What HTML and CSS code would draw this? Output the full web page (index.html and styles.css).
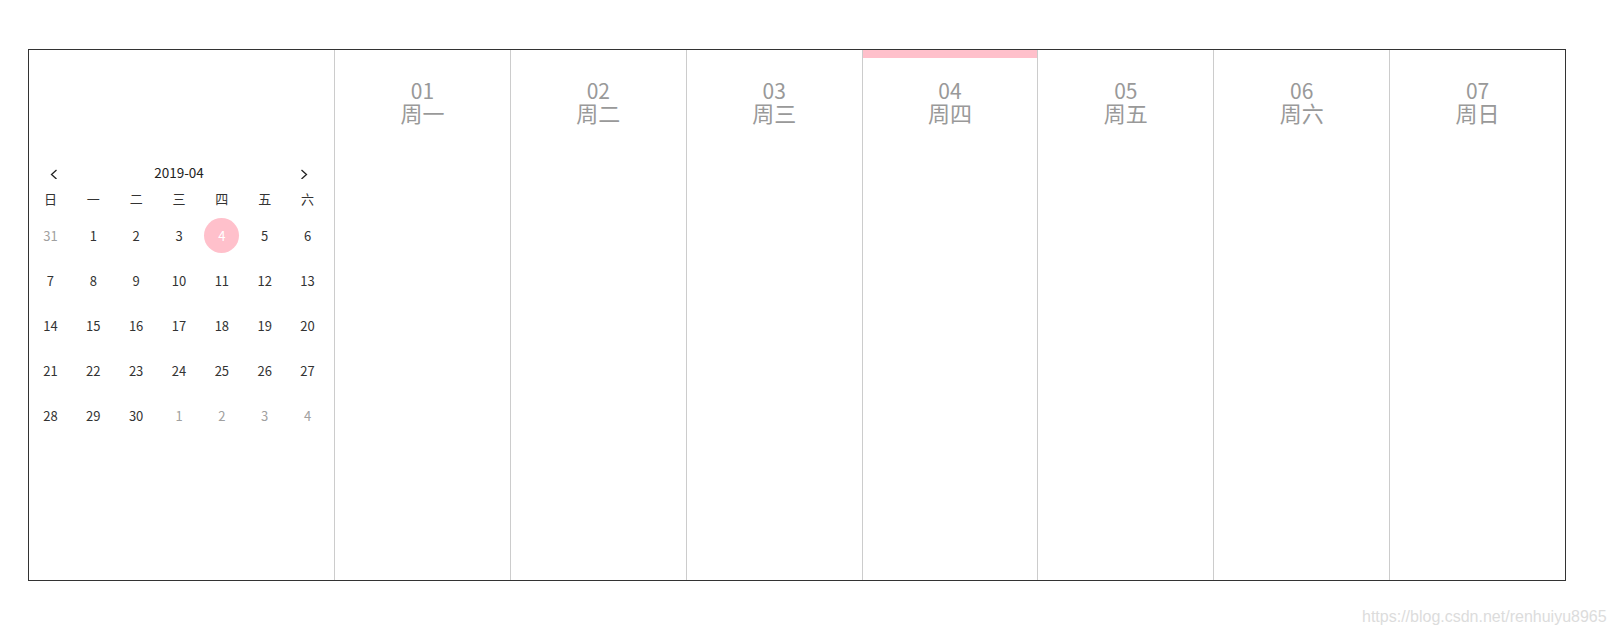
FILE: index.html
```html
<!DOCTYPE html>
<html lang="zh-CN">
<head>
<meta charset="utf-8">
<title>周视图日历</title>
<link rel="stylesheet" href="styles.css">
</head>
<body>
<div class="board">
  <aside class="side">
    <div class="cal">
      <div class="cal-head">
        <span class="arrow"><svg viewBox="0 0 8 14" width="8" height="14"><polyline points="6.5,5 1.5,9.5 6.5,14" fill="none" stroke="#222" stroke-width="1.3"/></svg></span>
        <span class="cal-title">2019-04</span>
        <span class="arrow"><svg viewBox="0 0 8 14" width="8" height="14"><polyline points="1.5,5 6.5,9.5 1.5,14" fill="none" stroke="#222" stroke-width="1.3"/></svg></span>
      </div>
      <div class="cal-week">
        <span>日</span><span>一</span><span>二</span><span>三</span><span>四</span><span>五</span><span>六</span>
      </div>
      <div class="cal-days">
        <span class="other">31</span><span>1</span><span>2</span><span>3</span><span class="sel"><i>4</i></span><span>5</span><span>6</span>
        <span>7</span><span>8</span><span>9</span><span>10</span><span>11</span><span>12</span><span>13</span>
        <span>14</span><span>15</span><span>16</span><span>17</span><span>18</span><span>19</span><span>20</span>
        <span>21</span><span>22</span><span>23</span><span>24</span><span>25</span><span>26</span><span>27</span>
        <span>28</span><span>29</span><span>30</span><span class="other">1</span><span class="other">2</span><span class="other">3</span><span class="other">4</span>
      </div>
    </div>
  </aside>
  <section class="week">
    <div class="col"><div class="strip"></div><div class="col-head"><div class="num">01</div><div class="day">周一</div></div></div>
    <div class="col"><div class="strip"></div><div class="col-head"><div class="num">02</div><div class="day">周二</div></div></div>
    <div class="col"><div class="strip"></div><div class="col-head"><div class="num">03</div><div class="day">周三</div></div></div>
    <div class="col"><div class="strip active"></div><div class="col-head"><div class="num">04</div><div class="day">周四</div></div></div>
    <div class="col"><div class="strip"></div><div class="col-head"><div class="num">05</div><div class="day">周五</div></div></div>
    <div class="col"><div class="strip"></div><div class="col-head"><div class="num">06</div><div class="day">周六</div></div></div>
    <div class="col"><div class="strip"></div><div class="col-head"><div class="num">07</div><div class="day">周日</div></div></div>
  </section>
</div>
<div class="watermark">https://blog.csdn.net/renhuiyu8965</div>
</body>
</html>
```

FILE: styles.css
```css
html, body {
  margin: 0;
  padding: 0;
  background: #fff;
}
body {
  width: 1613px;
  height: 637px;
  position: relative;
  overflow: hidden;
  font-family: "Noto Sans CJK SC", "Noto Sans", sans-serif;
  color: #333;
}
.board {
  margin: 49px 0 0 28px;
  width: 1536px;
  height: 530px;
  border: 1px solid #333;
  display: flex;
}
.side {
  width: 305px;
  flex: none;
  border-right: 1px solid #ccc;
  padding-top: 111px;
  box-sizing: content-box;
}
.cal {
  width: 300px;
}
.cal-head {
  height: 22px;
  display: flex;
  align-items: center;
  justify-content: space-between;
  padding: 0 21px 0 21px;
}
.arrow {
  display: flex;
  width: 8px;
  height: 14px;
}
.arrow svg {
  display: block;
}
.cal-title {
  font-size: 13.5px;
  line-height: 22px;
  color: #222;
}
.cal-week {
  margin-top: 5px;
  display: grid;
  grid-template-columns: repeat(7, 1fr);
  align-items: start;
  height: 25px;
  line-height: 22px;
  font-size: 13px;
  text-align: center;
  color: #333;
}
.cal-days {
  display: grid;
  grid-template-columns: repeat(7, 1fr);
  grid-auto-rows: 45px;
  font-size: 13px;
  color: #333;
}
.cal-days span {
  display: flex;
  align-items: center;
  justify-content: center;
}
.cal-days .other {
  color: #a0a0a0;
}
.cal-days .sel i {
  font-style: normal;
  width: 35px;
  height: 35px;
  border-radius: 50%;
  background: #ffc0cb;
  color: #fff;
  display: flex;
  align-items: center;
  justify-content: center;
}
.week {
  flex: 1;
  display: flex;
}
.col {
  flex: 1;
  border-right: 1px solid #ccc;
  display: flex;
  flex-direction: column;
}
.col:last-child {
  border-right: none;
}
.strip {
  height: 8px;
}
.strip.active {
  background: #ffc0cb;
}
.col-head {
  padding-top: 21px;
  text-align: center;
  color: #999;
}
.col-head .num {
  font-size: 21px;
  line-height: 22px;
}
.col-head .day {
  font-size: 22px;
  line-height: 22px;
}
.watermark {
  position: absolute;
  left: 1362px;
  top: 608px;
  font-family: "Liberation Sans", Arial, sans-serif;
  font-size: 16px;
  color: #dcdcdc;
  white-space: nowrap;
}
```
